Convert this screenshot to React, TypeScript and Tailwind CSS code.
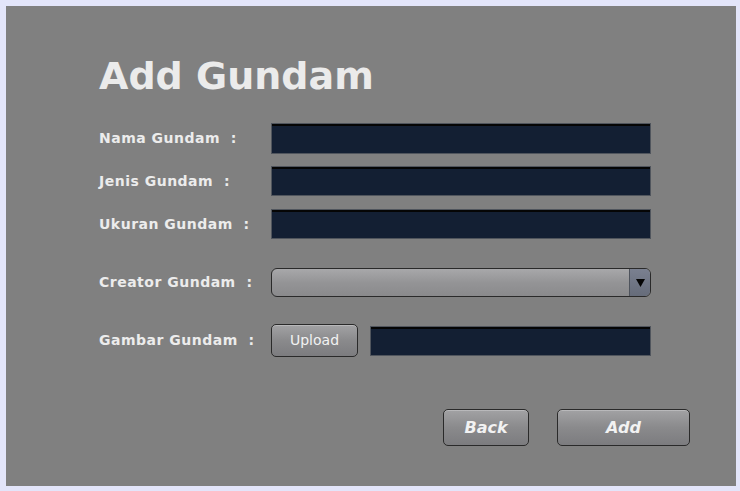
import React from "react";

const comic = { fontFamily: '"Comic Sans MS", "DejaVu Sans", sans-serif' };

function Field({ className = "" }: { className?: string }) {
  return (
    <div
      className={`bg-[#131f33] border border-[#50555d] shadow-[inset_0_2px_0_#050505] ${className}`}
    />
  );
}

function Label({ children }: { children: React.ReactNode }) {
  return (
    <div
      className="w-[172px] shrink-0 text-[14px] font-bold text-[#ececec] tracking-[0.5px] whitespace-pre"
      style={comic}
    >
      {children}
    </div>
  );
}

function Btn({ children, className = "", italic = false }: { children: React.ReactNode; className?: string; italic?: boolean }) {
  return (
    <div
      className={`flex items-center justify-center rounded-[5px] border border-[#2a2a2a] bg-gradient-to-b from-[#a2a2a4] via-[#8a8a8c] to-[#7c7c7f] shadow-[inset_0_1px_0_rgba(255,255,255,0.25)] text-[#f2f2f2] ${className}`}
    >
      <span className={italic ? "italic font-bold text-[16px]" : "text-[14px]"} style={italic ? comic : { fontFamily: '"DejaVu Sans", sans-serif' }}>
        {children}
      </span>
    </div>
  );
}

export default function App() {
  return (
    <div className="w-[740px] h-[491px] bg-[#e3e5fa] pl-[6px] pt-[6px]">
      <div className="w-[730px] h-[480px] bg-[#808080] flex flex-col pl-[93px] pt-[40px]">
        <div
          className="h-[60px] leading-[60px] text-[38px] text-[#ebebeb] font-bold"
          style={comic}
        >
          Add Gundam
        </div>
        <div className="mt-[17px] h-[31px] flex items-center">
          <Label>Nama Gundam  :</Label>
          <Field className="w-[380px] h-[31px]" />
        </div>
        <div className="mt-[12px] h-[30px] flex items-center">
          <Label>Jenis Gundam  :</Label>
          <Field className="w-[380px] h-[30px]" />
        </div>
        <div className="mt-[13px] h-[30px] flex items-center">
          <Label>Ukuran Gundam  :</Label>
          <Field className="w-[380px] h-[30px]" />
        </div>
        <div className="mt-[29px] h-[29px] flex items-center">
          <Label>Creator Gundam  :</Label>
          <div className="w-[380px] h-[29px] flex rounded-[6px] border border-[#2a2a2a] overflow-hidden bg-gradient-to-b from-[#a8a8aa] via-[#949496] to-[#8a8a8c]">
            <div className="flex-1" />
            <div className="w-[21px] flex items-center justify-center border-l border-[#4e535c] bg-gradient-to-b from-[#7a8090] to-[#666c7a]">
              <svg width="9" height="8" viewBox="0 0 9 8">
                <path d="M0 0 H9 L4.5 8 Z" fill="#050505" />
              </svg>
            </div>
          </div>
        </div>
        <div className="mt-[27px] h-[33px] flex items-center">
          <Label>Gambar Gundam  :</Label>
          <Btn className="w-[87px] h-[33px]">Upload</Btn>
          <Field className="ml-[12px] w-[281px] h-[30px]" />
        </div>
        <div className="mt-[52px] h-[37px] flex justify-end pr-[46px] gap-[28px]">
          <Btn italic className="w-[86px] h-[37px]">Back</Btn>
          <Btn italic className="w-[133px] h-[37px]">Add</Btn>
        </div>
      </div>
    </div>
  );
}
